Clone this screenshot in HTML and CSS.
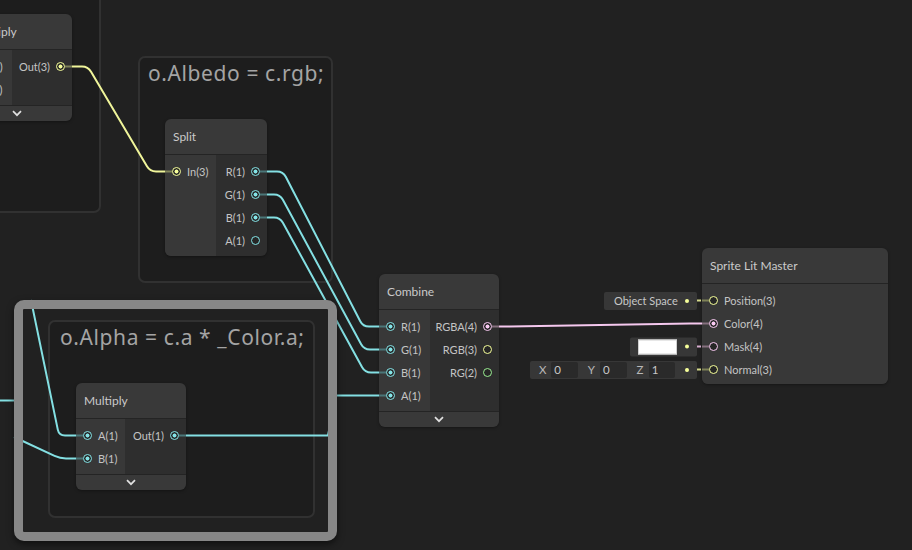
FILE: index.html
```html
<!DOCTYPE html>
<html>
<head>
<meta charset="utf-8">
<link rel="stylesheet" href="styles.css">
</head>
<body>
<div class="canvas">
  <div class="group g-left"></div>
  <div class="group g-albedo"><div class="group-title">o.Albedo = c.rgb;</div></div>
  <div class="group g-alpha"><div class="group-title">o.Alpha = c.a * _Color.a;</div></div>

  <div class="node n-top">
    <div class="node-title">Multiply</div>
    <div class="node-body">
      <div class="ports inputs">
        <div class="port-row"><span class="port v3 on"></span><span class="label">A(3)</span></div>
        <div class="port-row"><span class="port v3 on"></span><span class="label">B(3)</span></div>
      </div>
      <div class="ports outputs">
        <div class="port-row"><span class="label">Out(3)</span><span class="port v3 on"></span></div>
      </div>
    </div>
    <div class="node-footer"><svg width="10" height="7" viewBox="0 0 10 7"><polyline points="1,1.2 5,5.2 9,1.2"/></svg></div>
  </div>

  <div class="node n-split">
    <div class="node-title">Split</div>
    <div class="node-body last">
      <div class="ports inputs">
        <div class="port-row"><span class="port v3 on"></span><span class="label">In(3)</span></div>
      </div>
      <div class="ports outputs">
        <div class="port-row"><span class="label">R(1)</span><span class="port v1 on"></span></div>
        <div class="port-row"><span class="label">G(1)</span><span class="port v1 on"></span></div>
        <div class="port-row"><span class="label">B(1)</span><span class="port v1 on"></span></div>
        <div class="port-row"><span class="label">A(1)</span><span class="port v1"></span></div>
      </div>
    </div>
  </div>

  <div class="node n-combine">
    <div class="node-title">Combine</div>
    <div class="node-body">
      <div class="ports inputs">
        <div class="port-row"><span class="port v1 on"></span><span class="label">R(1)</span></div>
        <div class="port-row"><span class="port v1 on"></span><span class="label">G(1)</span></div>
        <div class="port-row"><span class="port v1 on"></span><span class="label">B(1)</span></div>
        <div class="port-row"><span class="port v1 on"></span><span class="label">A(1)</span></div>
      </div>
      <div class="ports outputs">
        <div class="port-row"><span class="label">RGBA(4)</span><span class="port v4 on"></span></div>
        <div class="port-row"><span class="label">RGB(3)</span><span class="port v3"></span></div>
        <div class="port-row"><span class="label">RG(2)</span><span class="port v2"></span></div>
      </div>
    </div>
    <div class="node-footer"><svg width="10" height="7" viewBox="0 0 10 7"><polyline points="1,1.2 5,5.2 9,1.2"/></svg></div>
  </div>

  <div class="node n-multiply">
    <div class="node-title">Multiply</div>
    <div class="node-body">
      <div class="ports inputs">
        <div class="port-row"><span class="port v1 on"></span><span class="label">A(1)</span></div>
        <div class="port-row"><span class="port v1 on"></span><span class="label">B(1)</span></div>
      </div>
      <div class="ports outputs">
        <div class="port-row"><span class="label">Out(1)</span><span class="port v1 on"></span></div>
      </div>
    </div>
    <div class="node-footer"><svg width="10" height="7" viewBox="0 0 10 7"><polyline points="1,1.2 5,5.2 9,1.2"/></svg></div>
  </div>

  <div class="node n-master">
    <div class="node-title">Sprite Lit Master</div>
    <div class="node-body last master-body">
      <div class="ports inputs full">
        <div class="port-row">
          <div class="port-value pv-space"><span class="pv-text">Object Space</span><span class="pv-dot v3"></span></div>
          <span class="port v3"></span><span class="label">Position(3)</span>
        </div>
        <div class="port-row"><span class="port v4 on"></span><span class="label">Color(4)</span></div>
        <div class="port-row">
          <div class="port-value pv-mask"><span class="swatch"></span><span class="pv-dot v4"></span></div>
          <span class="port v4"></span><span class="label">Mask(4)</span>
        </div>
        <div class="port-row">
          <div class="port-value pv-normal">
            <span class="axis">X</span><span class="field">0</span>
            <span class="axis">Y</span><span class="field">0</span>
            <span class="axis">Z</span><span class="field">1</span>
            <span class="pv-dot v3"></span>
          </div>
          <span class="port v3"></span><span class="label">Normal(3)</span>
        </div>
      </div>
    </div>
  </div>

  <svg class="wires" width="912" height="550" viewBox="0 0 912 550">
    <g class="stub s-yellow">
      <path d="M65,66.5 H72"/>
      <path d="M165,171.5 H172"/>
      <path d="M702,300.5 H709"/>
      <path d="M702,369.5 H709"/>
    </g>
    <g class="stub s-cyan">
      <path d="M260,171.5 H267"/>
      <path d="M260,194.5 H267"/>
      <path d="M260,217.5 H267"/>
      <path d="M379,326.5 H386"/>
      <path d="M379,349.5 H386"/>
      <path d="M379,372.5 H386"/>
      <path d="M379,395.5 H386"/>
      <path d="M179,435.5 H186"/>
      <path d="M76,435.5 H83"/>
      <path d="M76,458.5 H83"/>
    </g>
    <g class="stub s-pink">
      <path d="M492,326.5 H499"/>
      <path d="M702,323.5 H709"/>
      <path d="M702,346.5 H709"/>
    </g>
    <g class="wire w-yellow">
      <path d="M72,66.5 H82 Q88,66.5 91.05,71.67 L146.95,166.33 Q150,171.5 156,171.5 H165"/>
    </g>
    <g class="wire w-cyan">
      <path d="M267,171.5 H277 Q283,171.5 285.75,176.83 L360.25,321.17 Q363,326.5 369,326.5 H379"/>
      <path d="M267,194.5 H274 Q280,194.5 282.86,199.78 L361.14,344.22 Q364,349.5 370,349.5 H379"/>
      <path d="M267,217.5 H274 Q280,217.5 282.88,222.76 L362.12,367.24 Q365,372.5 371,372.5 H379"/>
      <path d="M186,435.5 H328 L336,395.5 H379"/>
      <path d="M31,300 L57.79,429.63 Q59,435.5 65,435.5 H76"/>
      <path d="M14,437 L54.56,455.96 Q60,458.5 66,458.5 H76"/>
      <path d="M0,400.5 H20"/>
    </g>
    <g class="wire w-pink">
      <path d="M499,326.5 H510 L690,323.5 H702"/>
    </g>
    <g class="dash d-yellow">
      <path d="M697,300.5 H701"/>
      <path d="M697,369.5 H701"/>
    </g>
    <g class="dash d-pink">
      <path d="M697,346.5 H701"/>
    </g>
  </svg>

  <div class="selection"></div>
</div>
</body>
</html>
```

FILE: styles.css
```css
html, body {
  margin: 0;
  padding: 0;
  background: #202020;
}

.canvas {
  position: relative;
  width: 912px;
  height: 550px;
  overflow: hidden;
  background: #212121;
  font-family: "Lato", "Noto Sans", sans-serif;
  color: #c4c4c4;
}

/* ---------- groups ---------- */
.group {
  position: absolute;
  box-sizing: border-box;
  border: 2px solid #313131;
  border-radius: 7px;
  background: #1d1d1d;
}
.g-left   { left: -100px; top: -100px; width: 201px; height: 313px; }
.g-albedo { left: 138px; top: 56px; width: 195px; height: 227px; }
.g-alpha  { left: 48px; top: 320px; width: 267px; height: 198px; }

.group-title {
  padding: 1px 8px;
  font-family: "Noto Sans", "Open Sans", sans-serif;
  font-size: 21px;
  letter-spacing: 0.6px;
  line-height: 28px;
  color: #a4a4a4;
  white-space: nowrap;
}
.g-alpha .group-title { padding-left: 10px; }

/* ---------- nodes ---------- */
.node {
  position: absolute;
  display: flex;
  flex-direction: column;
  border-radius: 6px;
  box-shadow: 0 1px 3px rgba(0,0,0,0.35);
}
.n-top      { left: -39px; top: 14px; width: 111px; }
.n-split    { left: 165px; top: 119px; width: 102px; }
.n-combine  { left: 379px; top: 274px; width: 120px; }
.n-multiply { left: 76px; top: 383px; width: 110px; }
.n-master   { left: 702px; top: 248px; width: 186px; }

.node-title {
  height: 35px;
  line-height: 35px;
  padding-left: 8px;
  font-size: 12px;
  color: #cacaca;
  background: #393939;
  border-bottom: 1px solid #242424;
  border-radius: 6px 6px 0 0;
  white-space: nowrap;
}
.n-top .node-title { padding-left: 12px; }

.node-body {
  display: flex;
  background: #2e2e2e;
}
.node-body.last { border-radius: 0 0 6px 6px; }

.ports {
  display: flex;
  flex-direction: column;
  padding: 5px 0 4px;
}
.inputs {
  background: #383838;
  flex: none;
}
.node-body.last .inputs { border-bottom-left-radius: 6px; }
.outputs { flex: 1; }

.n-top .inputs      { width: 51px; }
.n-split .inputs    { width: 51px; }
.n-combine .inputs  { width: 51px; }
.n-multiply .inputs { width: 49px; }
.inputs.full {
  width: 100%;
  padding-bottom: 3px;
  border-radius: 0 0 6px 6px;
}

.port-row {
  position: relative;
  height: 23px;
  display: flex;
  align-items: center;
  gap: 6px;
  font-size: 11px;
  white-space: nowrap;
}
.inputs .port-row  { padding-left: 7px; }
.outputs .port-row { padding-right: 7px; justify-content: flex-end; }

.port {
  --c: #84e4e7;
  flex: none;
  box-sizing: border-box;
  width: 9px;
  height: 9px;
  border-radius: 50%;
  border: 1.5px solid var(--c);
  background: #262626;
}
.port.on {
  background: radial-gradient(circle, var(--c) 0 1.7px, #262626 2.3px);
}
.v1 { --c: #84e4e7; }
.v2 { --c: #9aef92; }
.v3 { --c: #f6ff9a; }
.v4 { --c: #fbcbf4; }

.node-footer {
  height: 15px;
  border-top: 1px solid #242424;
  background: #393939;
  border-radius: 0 0 6px 6px;
  display: flex;
  align-items: center;
  justify-content: center;
}
.node-footer polyline {
  fill: none;
  stroke: #e0e0e0;
  stroke-width: 1.7;
}

/* ---------- master inline values ---------- */
.port-value {
  position: absolute;
  right: calc(100% + 5px);
  top: 50%;
  transform: translateY(-50%);
  height: 18px;
  box-sizing: border-box;
  background: #373737;
  border-radius: 2px;
  display: flex;
  align-items: center;
  padding-right: 8px;
  font-size: 11px;
  color: #c8c8c8;
}
.pv-space { width: 93px; padding-left: 10px; }
.pv-space .pv-text { flex: 1; }
.pv-mask { width: 67px; height: 19px; padding-left: 8px; }
.swatch {
  width: 39px;
  height: 15px;
  box-sizing: border-box;
  background: #ffffff;
  border: 1px solid #d0d0d0;
  margin-right: 8px;
}
.pv-normal { width: 167px; padding-left: 9px; }
.axis {
  width: 13px;
  font-size: 11.5px;
  color: #b8b8b8;
}
.field {
  width: 28px;
  height: 16px;
  box-sizing: border-box;
  background: #2a2a2a;
  border-radius: 2px;
  padding-left: 3px;
  line-height: 16px;
  margin-right: 10px;
  font-size: 11.5px;
  color: #c8c8c8;
}
.field:last-of-type { margin-right: 9px; }
.pv-dot {
  --c: #f6ff9a;
  width: 4px;
  height: 4px;
  border-radius: 50%;
  background: var(--c);
  margin-left: auto;
}

/* ---------- wires ---------- */
.wires {
  position: absolute;
  left: 0;
  top: 0;
  pointer-events: none;
}
.wires path {
  fill: none;
  stroke-width: 2;
  stroke-linejoin: round;
}
.w-cyan path   { stroke: #84e0e3; }
.w-yellow path { stroke: #f0f59a; }
.w-pink path   { stroke: #f5c8ee; }
.s-cyan path   { stroke: #4a7678; }
.s-yellow path { stroke: #7f8258; }
.s-pink path   { stroke: #86707f; }
.dash path { stroke-width: 2; }
.d-yellow path { stroke: #d4d98a; }
.d-pink path   { stroke: #d6adce; }

/* ---------- selection frame ---------- */
.selection {
  position: absolute;
  left: 14px;
  top: 300px;
  width: 323px;
  height: 241px;
  box-sizing: border-box;
  border: 9px solid #878787;
  border-radius: 10px;
  box-shadow: 0 3px 7px rgba(0,0,0,0.55);
}
```
